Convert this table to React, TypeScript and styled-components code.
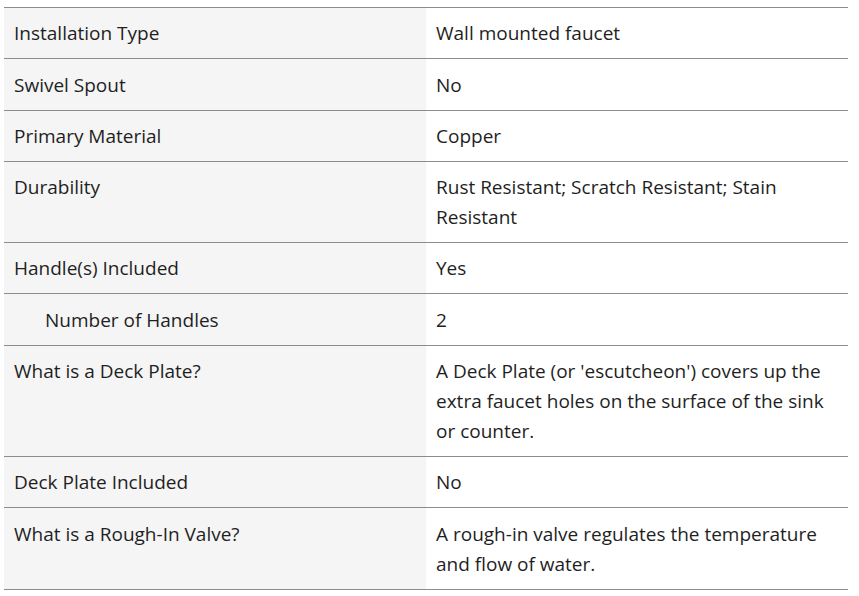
import React from "react";
import styled, { createGlobalStyle } from "styled-components";

const Global = createGlobalStyle`
  html, body { margin: 0; padding: 0; background: #fff; }
  body { font-family: "Open Sans", "Noto Sans", sans-serif; }
`;

const Page = styled.div`
  padding: 7px 0 0 4px;
`;

const Table = styled.div`
  width: 844px;
  display: grid;
  grid-template-columns: 422px 422px;
  border-top: 1px solid #8c8c8c;
`;

const Cell = styled.div<{ $label?: boolean; $indent?: boolean }>`
  background: ${(p) => (p.$label ? "#f5f5f5" : "#fff")};
  border-bottom: 1px solid #8c8c8c;
  padding: 10.3px 12px 10px ${(p) => (p.$indent ? "41px" : "10px")};
  font-size: 19px;
  line-height: 30px;
  color: #1f1f1f;
`;

const rows: [string, string, boolean?][] = [
  ["Installation Type", "Wall mounted faucet"],
  ["Swivel Spout", "No"],
  ["Primary Material", "Copper"],
  ["Durability", "Rust Resistant; Scratch Resistant; Stain Resistant"],
  ["Handle(s) Included", "Yes"],
  ["Number of Handles", "2", true],
  [
    "What is a Deck Plate?",
    "A Deck Plate (or 'escutcheon') covers up the extra faucet holes on the surface of the sink or counter.",
  ],
  ["Deck Plate Included", "No"],
  ["What is a Rough-In Valve?", "A rough-in valve regulates the temperature and flow of water."],
];

export default function App() {
  return (
    <Page>
      <Global />
      <Table>
        {rows.map(([k, v, indent]) => (
          <React.Fragment key={k}>
            <Cell $label $indent={indent}>{k}</Cell>
            <Cell>{v}</Cell>
          </React.Fragment>
        ))}
      </Table>
    </Page>
  );
}
